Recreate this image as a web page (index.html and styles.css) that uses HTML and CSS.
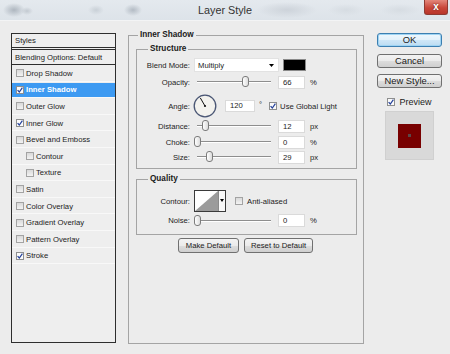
FILE: index.html
```html
<!DOCTYPE html>
<html>
<head>
<meta charset="utf-8">
<title>Layer Style</title>
<link rel="stylesheet" href="styles.css">
</head>
<body>
<div class="window">
  <div class="titlebar">
    <span class="title">Layer Style</span>
    <span class="close">x</span>
  </div>
  <div class="content">
    <div class="styles">
      <div class="row head">Styles</div>
      <div class="row blend">Blending Options: Default</div>
      <div class="row item"><span class="cb"></span>Drop Shadow</div>
      <div class="row item sel"><span class="cb on"><svg width="6" height="6" viewBox="0 0 6 6"><path d="M0.6 3.1 L2.3 5 L5.4 0.6" fill="none" stroke="#23409a" stroke-width="1.2"/></svg></span>Inner Shadow</div>
      <div class="row item"><span class="cb"></span>Outer Glow</div>
      <div class="row item"><span class="cb on"><svg width="6" height="6" viewBox="0 0 6 6"><path d="M0.6 3.1 L2.3 5 L5.4 0.6" fill="none" stroke="#23409a" stroke-width="1.2"/></svg></span>Inner Glow</div>
      <div class="row item"><span class="cb"></span>Bevel and Emboss</div>
      <div class="row item sub"><span class="cb"></span>Contour</div>
      <div class="row item sub"><span class="cb"></span>Texture</div>
      <div class="row item"><span class="cb"></span>Satin</div>
      <div class="row item"><span class="cb"></span>Color Overlay</div>
      <div class="row item"><span class="cb"></span>Gradient Overlay</div>
      <div class="row item"><span class="cb"></span>Pattern Overlay</div>
      <div class="row item"><span class="cb on"><svg width="6" height="6" viewBox="0 0 6 6"><path d="M0.6 3.1 L2.3 5 L5.4 0.6" fill="none" stroke="#23409a" stroke-width="1.2"/></svg></span>Stroke</div>
    </div>

    <fieldset class="group main">
      <legend>Inner Shadow</legend>
      <fieldset class="group sub structure">
        <legend>Structure</legend>
        <div class="frow r-blend">
          <span class="lbl">Blend Mode:</span>
          <div class="select">Multiply<svg class="arrow" width="5" height="3" viewBox="0 0 5 3"><polygon points="0,0 5,0 2.5,3" fill="#000"/></svg></div>
          <span class="swatch"></span>
        </div>
        <div class="frow r-opacity">
          <span class="lbl">Opacity:</span>
          <div class="slider"><div class="track"><span class="thumb" style="left:66%"></span></div></div>
          <span class="num">66</span><span class="unit">%</span>
        </div>
        <div class="frow r-angle">
          <span class="lbl">Angle:</span>
          <svg class="dial" width="24" height="24" viewBox="0 0 24 24">
            <circle cx="12" cy="12" r="10.8" fill="#f3f2ee" stroke="#4a5674" stroke-width="1.3"/>
            <line x1="12" y1="12" x2="7.3" y2="3.9" stroke="#111" stroke-width="1"/>
            <circle cx="12" cy="12" r="1.1" fill="#111"/>
          </svg>
          <span class="num wide">120</span><span class="deg">°</span>
          <span class="cb on gl"><svg width="6" height="6" viewBox="0 0 6 6"><path d="M0.6 3.1 L2.3 5 L5.4 0.6" fill="none" stroke="#23409a" stroke-width="1.2"/></svg></span><span class="cblbl">Use Global Light</span>
        </div>
        <div class="frow r-distance">
          <span class="lbl">Distance:</span>
          <div class="slider"><div class="track"><span class="thumb" style="left:11%"></span></div></div>
          <span class="num">12</span><span class="unit">px</span>
        </div>
        <div class="frow r-choke">
          <span class="lbl">Choke:</span>
          <div class="slider"><div class="track"><span class="thumb" style="left:0%"></span></div></div>
          <span class="num">0</span><span class="unit">%</span>
        </div>
        <div class="frow r-size">
          <span class="lbl">Size:</span>
          <div class="slider"><div class="track"><span class="thumb" style="left:17%"></span></div></div>
          <span class="num">29</span><span class="unit">px</span>
        </div>
      </fieldset>

      <fieldset class="group sub quality">
        <legend>Quality</legend>
        <div class="frow r-contour">
          <span class="lbl">Contour:</span>
          <div class="contour">
            <svg class="curve" width="23" height="20" viewBox="0 0 23 20"><rect width="23" height="20" fill="#fff"/><polygon points="0,20 23,0 23,20" fill="#9b9b9b"/></svg>
            <span class="cdrop"><svg width="4" height="3" viewBox="0 0 4 3"><polygon points="0,0 4,0 2,3" fill="#000"/></svg></span>
          </div>
          <span class="cb aa"></span><span class="cblbl">Anti-aliased</span>
        </div>
        <div class="frow r-noise">
          <span class="lbl">Noise:</span>
          <div class="slider"><div class="track"><span class="thumb" style="left:0%"></span></div></div>
          <span class="num">0</span><span class="unit">%</span>
        </div>
      </fieldset>

      <div class="btnrow">
        <button class="btn make">Make Default</button>
        <button class="btn reset">Reset to Default</button>
      </div>
    </fieldset>

    <div class="side">
      <button class="btn big ok">OK</button>
      <button class="btn big cancel">Cancel</button>
      <button class="btn big newstyle">New Style...</button>
      <div class="preview-row">
        <span class="cb on"><svg width="6" height="6" viewBox="0 0 6 6"><path d="M0.6 3.1 L2.3 5 L5.4 0.6" fill="none" stroke="#23409a" stroke-width="1.2"/></svg></span><span class="plbl">Preview</span>
      </div>
      <div class="preview">
        <div class="swatch-red"><span class="dot"></span></div>
      </div>
    </div>
  </div>
</div>
</body>
</html>
```

FILE: styles.css
```css
* { box-sizing: border-box; }
html, body { margin: 0; padding: 0; }
body {
  width: 450px;
  height: 354px;
  overflow: hidden;
  background: #ececec;
  font-family: "Liberation Sans", Arial, sans-serif;
  font-size: 7.7px;
  color: #1c1c1c;
}
.window { width: 450px; height: 354px; background: #ececec; }

/* title bar */
.titlebar {
  height: 21px;
  position: relative;
  display: flex;
  justify-content: center;
  align-items: flex-start;
  border-bottom: 1px solid #f3f4f5;
  background:
    radial-gradient(ellipse 11px 7px at 14px 10px, #aeb6bf 0%, rgba(174,182,191,0) 100%),
    radial-gradient(ellipse 6px 4px at 27px 11px, #c2c9d0 0%, rgba(194,201,208,0) 100%),
    radial-gradient(ellipse 8px 5px at 96px 10px, #c9d0d7 0%, rgba(201,208,215,0) 100%),
    radial-gradient(ellipse 9px 6px at 133px 10px, #b3bbc4 0%, rgba(179,187,196,0) 100%),
    radial-gradient(ellipse 30px 8px at 287px 10px, #cdd3da 0%, rgba(205,211,218,0) 100%),
    radial-gradient(ellipse 18px 6px at 346px 10px, #d6dce2 0%, rgba(214,220,226,0) 100%),
    radial-gradient(ellipse 20px 6px at 400px 10px, #d6dce2 0%, rgba(214,220,226,0) 100%),
    linear-gradient(#e4e9ee, #dde3e9);
}
.title {
  font-size: 10.8px;
  line-height: 13px;
  padding-top: 4px;
  color: #333;
}
.close {
  position: absolute;
  right: 2px;
  top: 0;
  width: 24px;
  height: 15px;
  border: 1px solid #8e3a32;
  border-top: none;
  border-radius: 0 0 3px 3px;
  background: linear-gradient(#e3877b, #c9473a 55%, #b8352a);
  color: #fff;
  font-weight: bold;
  font-size: 10px;
  line-height: 13px;
  text-align: center;
  text-shadow: 0 0 2px #5a1a14;
}

/* main content */
.content {
  display: flex;
  align-items: flex-start;
  padding: 9px 0 0 11px;
}

/* styles list */
.styles {
  flex: none;
  width: 105px;
  height: 310px;
  margin-top: 3px;
  border: 1px solid #2e2e2e;
  background: #eeeeee;
}
.row {
  display: flex;
  align-items: center;
  white-space: nowrap;
}
.row.head {
  height: 16px;
  padding-left: 3px;
  border-bottom: 3px double #2e2e2e;
}
.row.blend {
  height: 15px;
  padding-left: 3px;
  border-bottom: 1px solid #2e2e2e;
}
.row.item {
  height: 16.6px;
  padding-left: 4px;
  box-shadow: inset 0 -1px 0 #f8f8f8;
}
.row.item.sub { padding-left: 14px; }
.row.sel {
  background: linear-gradient(#3d9af2, #3d9af2) 0 1px / 100% calc(100% - 2px) no-repeat;
  color: #fff;
  font-weight: bold;
}

.cb {
  flex: none;
  width: 8px;
  height: 8px;
  margin-right: 2px;
  border: 1px solid #a3a3a3;
  background: linear-gradient(#d9d9d9, #f3f3f3);
  display: flex;
  align-items: center;
  justify-content: center;
}
.cb.on {
  background: #fbfbfb;
  border-color: #8e8f8f;
}

/* group boxes */
fieldset {
  margin: 0;
  min-width: 0;
  border: 1px solid #a4a4a4;
}
legend {
  padding: 0 2px;
  margin-left: 2px;
  font-weight: bold;
  font-size: 8.2px;
  line-height: 10px;
  color: #1a1a1a;
}
.group.main {
  flex: none;
  width: 236px;
  height: 314px;
  margin-left: 12px;
  padding: 4px 6px 0 7px;
}
.group.sub {
  width: 221px;
  padding: 4px 5px 4px 9px;
}
.group.quality {
  margin-top: 5px;
  padding-top: 6px;
  padding-bottom: 7px;
}

.frow {
  display: flex;
  align-items: center;
  white-space: nowrap;
}
.lbl {
  flex: none;
  width: 44px;
  margin-right: 4px;
  text-align: right;
}
.r-blend { height: 14px; margin-bottom: 3px; }
.r-opacity { height: 14px; margin-bottom: 4px; }
.r-angle { height: 26px; }
.r-distance { height: 14px; margin-bottom: 2px; }
.r-choke { height: 14px; margin-bottom: 1px; }
.r-size { height: 14px; }
.r-contour { height: 22px; margin-bottom: 2px; }
.r-noise { height: 13px; }

.select {
  flex: none;
  width: 85px;
  height: 14px;
  background: #fff;
  border: 1px solid #e2e2e2;
  padding-left: 3px;
  display: flex;
  align-items: center;
  justify-content: space-between;
  padding-right: 4px;
}
.swatch {
  flex: none;
  width: 23px;
  height: 12px;
  margin-left: 4px;
  background: #000;
  border: 1px solid #8a8a8a;
}

.slider {
  flex: none;
  width: 80px;
  height: 13px;
  padding: 0 3px;
  display: flex;
  align-items: center;
}
.track {
  position: relative;
  width: 100%;
  height: 2px;
  border-top: 1px solid #8e8e8e;
  border-bottom: 1px solid #ffffff;
}
.thumb {
  position: absolute;
  top: -6px;
  width: 7px;
  height: 11px;
  margin-left: -3.5px;
  border: 1px solid #7c7c7c;
  border-radius: 3px;
  background: linear-gradient(90deg, #ffffff, #dcdcdc);
}

.num {
  flex: none;
  width: 27px;
  height: 13px;
  margin-left: 4px;
  padding-left: 4px;
  background: #fff;
  border: 1px solid #dadada;
  line-height: 11px;
}
.num.wide { width: 30px; margin-left: 8px; height: 12px; line-height: 10px; }
.unit { margin-left: 5px; }
.deg { margin-left: 4px; align-self: flex-start; margin-top: 7px; }
.dial { flex: none; margin-left: -1px; }
.cb.gl { margin-left: 7px; margin-right: 3px; }
.cb.aa { margin-left: 9px; margin-right: 4px; }

.contour {
  flex: none;
  width: 32px;
  height: 22px;
  border: 1px solid #3a3a3a;
  display: flex;
  background: #fff;
}
.curve { flex: none; display: block; }
.cdrop {
  flex: none;
  width: 7px;
  height: 20px;
  border-left: 1px solid #8a8a8a;
  background: #f8f8f8;
  display: flex;
  justify-content: center;
  padding-top: 8px;
}

/* buttons */
.btn {
  margin: 0;
  padding: 0;
  height: 15px;
  border: 1px solid #707070;
  border-radius: 3px;
  background: linear-gradient(#f3f3f3 0%, #ebebeb 50%, #dddddd 51%, #cfcfcf 100%);
  font-family: "Liberation Sans", Arial, sans-serif;
  font-size: 7.7px;
  color: #1a1a1a;
  line-height: 13px;
  white-space: nowrap;
}
.btnrow {
  display: flex;
  justify-content: center;
  gap: 5px;
  margin-top: 3px;
  padding-right: 2px;
}
.btn.make { width: 61px; }
.btn.reset { width: 69px; }

.side {
  flex: none;
  width: 65px;
  margin-left: 13px;
  margin-top: 3px;
  display: flex;
  flex-direction: column;
  align-items: center;
}
.btn.big {
  width: 65px;
  height: 14px;
  font-size: 9.4px;
  line-height: 12px;
}
.btn.ok {
  border-color: #3c7fb1;
  background: linear-gradient(#eef7fd 0%, #e2f1fb 50%, #cfe7f7 51%, #bcdcf2 100%);
  box-shadow: inset 0 0 0 1px #9fd4f3;
}
.btn.cancel { margin-top: 7px; }
.btn.newstyle { margin-top: 6px; }

.preview-row {
  margin-top: 9px;
  height: 10px;
  display: flex;
  align-items: center;
}
.preview-row .cb { margin-right: 4px; }
.plbl { font-size: 9px; line-height: 10px; }

.preview {
  margin-top: 4px;
  width: 49px;
  height: 49px;
  background: #d9d9d9;
  border: 1px solid #d0d0d0;
  display: flex;
  align-items: center;
  justify-content: center;
}
.swatch-red {
  width: 23px;
  height: 24px;
  background: #780000;
  display: flex;
  align-items: center;
  justify-content: center;
}
.dot {
  width: 3px;
  height: 3px;
  background: #5a4848;
}
```
